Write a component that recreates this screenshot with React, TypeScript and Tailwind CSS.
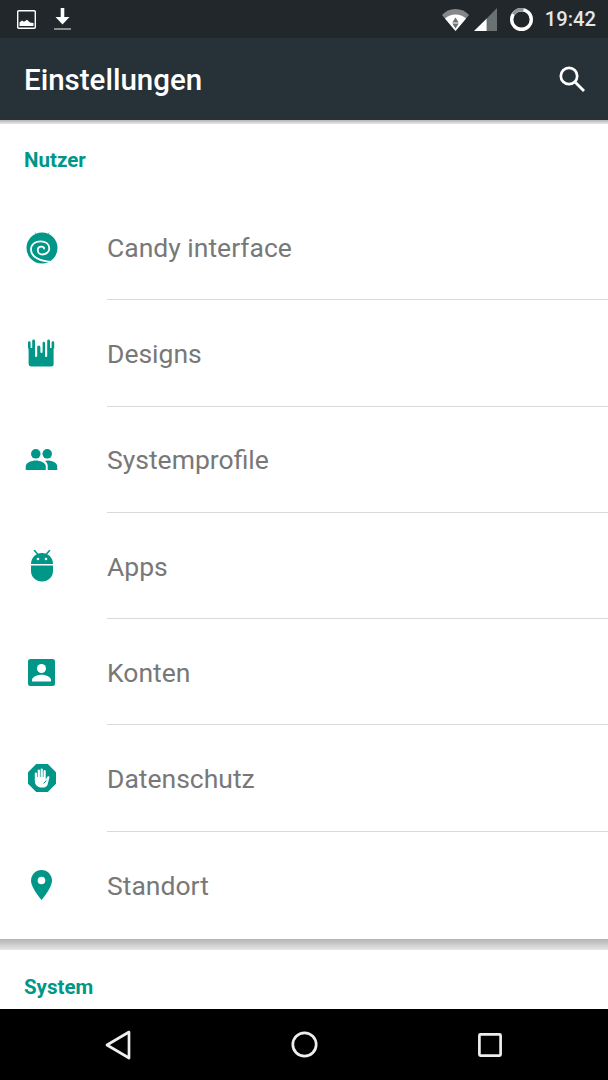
import { ReactNode } from 'react';

const iconColor = '#009688';

function CandyIcon() {
  return (
    <svg width="32" height="34" viewBox="0 0 32 34">
      <path d="M9 2.500 L10.500 5 M23 2.500 L21.500 5" stroke={iconColor} strokeWidth="1" opacity="0.5" />
      <circle cx="16" cy="18" r="15.500" fill={iconColor} />
      <path
        d="M25 32 C14 31 5 27 5 20 C5 14 9.500 11.400 14.600 11.400 C19.500 11.400 23.300 14 23.300 18.500 C23.300 22 20 24.500 16.400 24.500 C13.500 24.500 11.800 22.500 11.800 20.200 C11.800 18 13.500 16.700 15.300 16.700 C17 16.700 18.100 17.500 18.100 18.500"
        fill="none"
        stroke="#fff"
        strokeWidth="1.800"
        strokeLinecap="round"
      />
    </svg>
  );
}

function DesignsIcon() {
  return (
    <svg width="32" height="28" viewBox="0 0 30 28">
      <path
        fill={iconColor}
        d="M1 3.500a1.300 1.300 0 0 1 2.600 0V9h1.600V2a1.400 1.400 0 0 1 2.800 0v15a1.100 1.100 0 0 0 2.200 0V8a1.600 1.600 0 0 1 3.200 0v5a1.100 1.100 0 0 0 2.200 0V4a1.200 1.200 0 0 1 2.400 0v13a1.100 1.100 0 0 0 2.200 0V2a1.400 1.400 0 0 1 2.800 0v7h1.600V3.500a1.300 1.300 0 0 1 2.600 0V9.500h-.6V25a2.500 2.500 0 0 1-2.500 2.500H4A2.500 2.500 0 0 1 1.600 25V9.500H1z"
      />
    </svg>
  );
}

function PeopleIcon() {
  return (
    <svg width="33" height="21" viewBox="0 0 34 22">
      <circle cx="11" cy="5" r="5" fill={iconColor} />
      <circle cx="23" cy="5" r="5" fill={iconColor} />
      <path fill={iconColor} d="M0.500 22V18c0-3.800 6.500-6 10.500-6S21.500 14.200 21.500 18v4z" />
      <path fill={iconColor} d="M23.500 22V18c0-2.300-1-4-2.800-5.400.9-.3 1.700-.6 2.800-.6 4 0 10 2.200 10 6v4z" />
    </svg>
  );
}

function AndroidIcon() {
  return (
    <svg width="22" height="32" viewBox="0 0 22 32">
      <path d="M3.500 0.500 L6.500 4 M18.500 0.500 L15.500 4" stroke={iconColor} strokeWidth="1.500" strokeLinecap="round" />
      <path fill={iconColor} d="M0 14C0 7.500 5 3 11 3s11 4.500 11 11z" />
      <circle cx="7" cy="9" r="1.300" fill="#fff" />
      <circle cx="15" cy="9" r="1.300" fill="#fff" />
      <path fill={iconColor} d="M0 15.500h22V21c0 6-5 10.500-11 10.500S0 27 0 21z" />
    </svg>
  );
}

function ContactIcon() {
  return (
    <svg width="27" height="27" viewBox="0 0 27 27">
      <rect width="27" height="27" rx="2.500" fill={iconColor} />
      <circle cx="13.500" cy="9.500" r="4.500" fill="#fff" />
      <path fill="#fff" d="M4 22.500v-1.700c0-3.300 6.300-5.100 9.500-5.100s9.500 1.800 9.500 5.100v1.700z" />
    </svg>
  );
}

function StopIcon() {
  return (
    <svg width="28" height="28" viewBox="0 0 28 28">
      <path fill={iconColor} d="M8.200 0h11.600L28 8.200v11.600L19.800 28H8.200L0 19.800V8.200z" />
      <path
        fill="#fff"
        d="M8 21c-1-1.500-1.200-3-1.200-5V9.500a1.100 1.100 0 0 1 2.200 0V13h.7V6.500a1.100 1.100 0 0 1 2.200 0V13h.7V5.500a1.100 1.100 0 0 1 2.200 0V13h.7V7a1.100 1.100 0 0 1 2.200 0v9l.8-2c.5-1.200 1.100-1.800 2-1.800.6 0 1 .3 1 .8L19.500 21c-.8 1.600-2.500 2.600-5 2.600-3 0-5.300-.9-6.500-2.600z"
      />
      <path d="M15.500 19.500 L18.500 16.500" stroke={iconColor} strokeWidth="1" />
    </svg>
  );
}

function PinIcon() {
  return (
    <svg width="21" height="30" viewBox="0 0 21 30">
      <path fill={iconColor} d="M10.500 0C4.700 0 0 4.700 0 10.500 0 18 10.500 30 10.500 30S21 18 21 10.500C21 4.700 16.300 0 10.500 0z" />
      <circle cx="10.500" cy="10.500" r="3.800" fill="#fff" />
    </svg>
  );
}

const rows: { label: string; icon: ReactNode }[] = [
  { label: 'Candy interface', icon: <CandyIcon /> },
  { label: 'Designs', icon: <DesignsIcon /> },
  { label: 'Systemprofile', icon: <PeopleIcon /> },
  { label: 'Apps', icon: <AndroidIcon /> },
  { label: 'Konten', icon: <ContactIcon /> },
  { label: 'Datenschutz', icon: <StopIcon /> },
  { label: 'Standort', icon: <PinIcon /> },
];

function StatusBar() {
  return (
    <div className="flex h-[38px] shrink-0 items-center justify-between bg-[#21272b] pl-[17px] pr-[12px]">
      <div className="flex items-center gap-[18px]">
        <svg width="19" height="19" viewBox="0 0 19 19">
          <rect x="0.700" y="0.700" width="17.600" height="17.600" rx="1" fill="none" stroke="#fff" strokeWidth="1.400" />
          <path fill="#fff" d="M2.500 16v-3.500l2.500-2 2 1.200 3-2 3 2.800 3.500.5V16z" />
        </svg>
        <svg width="17" height="24" viewBox="0 0 17 24" className="mt-[1px]">
          <path fill="#fff" d="M6.700 0h3.600v9h5.200l-7 7.500L1.500 9h5.200z" />
          <rect x="0" y="20" width="17" height="2" fill="#8a8f92" />
        </svg>
      </div>
      <div className="flex items-center">
        <svg width="27" height="23" viewBox="0 0 27 23" className="mr-[5px]">
          <path fill="#fff" d="M0 7C3.500 3 8 1 13.500 1S23.500 3 27 7L13.500 23z" opacity="0.45" />
          <path fill="#fff" d="M3 10.500C6 8 9.500 6.500 13.500 6.500S21 8 24 10.500L13.500 23z" />
          <path fill="#6b7073" d="M13.500 9.500l3.200 5h-6.400zM10.300 15.500h6.400l-3.200 5z" />
        </svg>
        <svg width="23" height="23" viewBox="0 0 23 23" className="mr-[13px]">
          <path fill="#6b7073" d="M23 0v23H12.700V10.500z" />
          <path fill="#fff" d="M12.700 10.500V23H0z" />
        </svg>
        <svg width="23" height="23" viewBox="0 0 23 23" className="mr-[12px]">
          <circle cx="11.500" cy="11.500" r="9.800" fill="none" stroke="#fff" strokeWidth="3.400" />
          <path d="M3.300 6.200A9.800 9.800 0 0 1 13.500 1.900" fill="none" stroke="#8f9396" strokeWidth="3.400" />
        </svg>
        <span className="text-[20.200px] font-medium leading-none text-[#e4e6e7]">19:42</span>
      </div>
    </div>
  );
}

export default function App() {
  return (
    <div className="flex h-[1080px] w-[608px] flex-col overflow-hidden bg-white font-['Roboto',sans-serif]">
      <StatusBar />
      <header className="flex h-[82px] shrink-0 items-center justify-between bg-[#263238] pl-[24px] pr-[22px]">
        <h1 className="pt-[2px] text-[29.500px] font-medium text-white">Einstellungen</h1>
        <svg width="28" height="28" viewBox="0 0 28 28">
          <circle cx="11" cy="11" r="8.200" fill="none" stroke="#fff" strokeWidth="2.700" />
          <path d="M17 17 L26 26" stroke="#fff" strokeWidth="2.900" />
        </svg>
      </header>
      <div className="h-[4px] shrink-0 bg-gradient-to-b from-[#b4b4b4] to-[#e8e8e8]" />

      <main className="flex min-h-0 flex-1 flex-col">
        <p className="h-[70px] shrink-0 pl-[24px] pt-[24px] text-[20.500px] font-bold leading-[24px] text-[#009688]">Nutzer</p>
        {rows.map((row, i) => (
          <div key={row.label} className="flex h-[106.250px] shrink-0 items-center">
            <div className="flex w-[107px] shrink-0 justify-center pr-[24px]">{row.icon}</div>
            <div className={`flex h-full flex-1 items-center pt-[2px] ${i < rows.length - 1 ? 'border-b-[1.500px] border-[#d9d9d9]' : ''}`}>
              <span className="text-[26.500px] text-[#787878]">{row.label}</span>
            </div>
          </div>
        ))}
        <div className="mt-[1px] h-[11px] shrink-0 bg-gradient-to-b from-[#b4b4b4] to-[#e6e6e6]" />
        <p className="pl-[24px] pt-[25px] text-[20.500px] font-bold leading-[24px] text-[#009688]">System</p>
      </main>

      <nav className="grid h-[71px] shrink-0 grid-cols-[186px_186px_186px] items-center justify-center justify-items-center bg-black">
        <svg width="26" height="30" viewBox="0 0 26 30">
          <path d="M24 2 L2 15 L24 28 Z" fill="none" stroke="#eee" strokeWidth="2.700" strokeLinejoin="round" />
        </svg>
        <svg width="27" height="27" viewBox="0 0 27 27">
          <circle cx="13.500" cy="13.500" r="11.700" fill="none" stroke="#eee" strokeWidth="2.700" />
        </svg>
        <svg width="24" height="24" viewBox="0 0 24 24">
          <rect x="1.400" y="1.400" width="21.200" height="21.200" rx="1" fill="none" stroke="#eee" strokeWidth="2.700" />
        </svg>
      </nav>
    </div>
  );
}
